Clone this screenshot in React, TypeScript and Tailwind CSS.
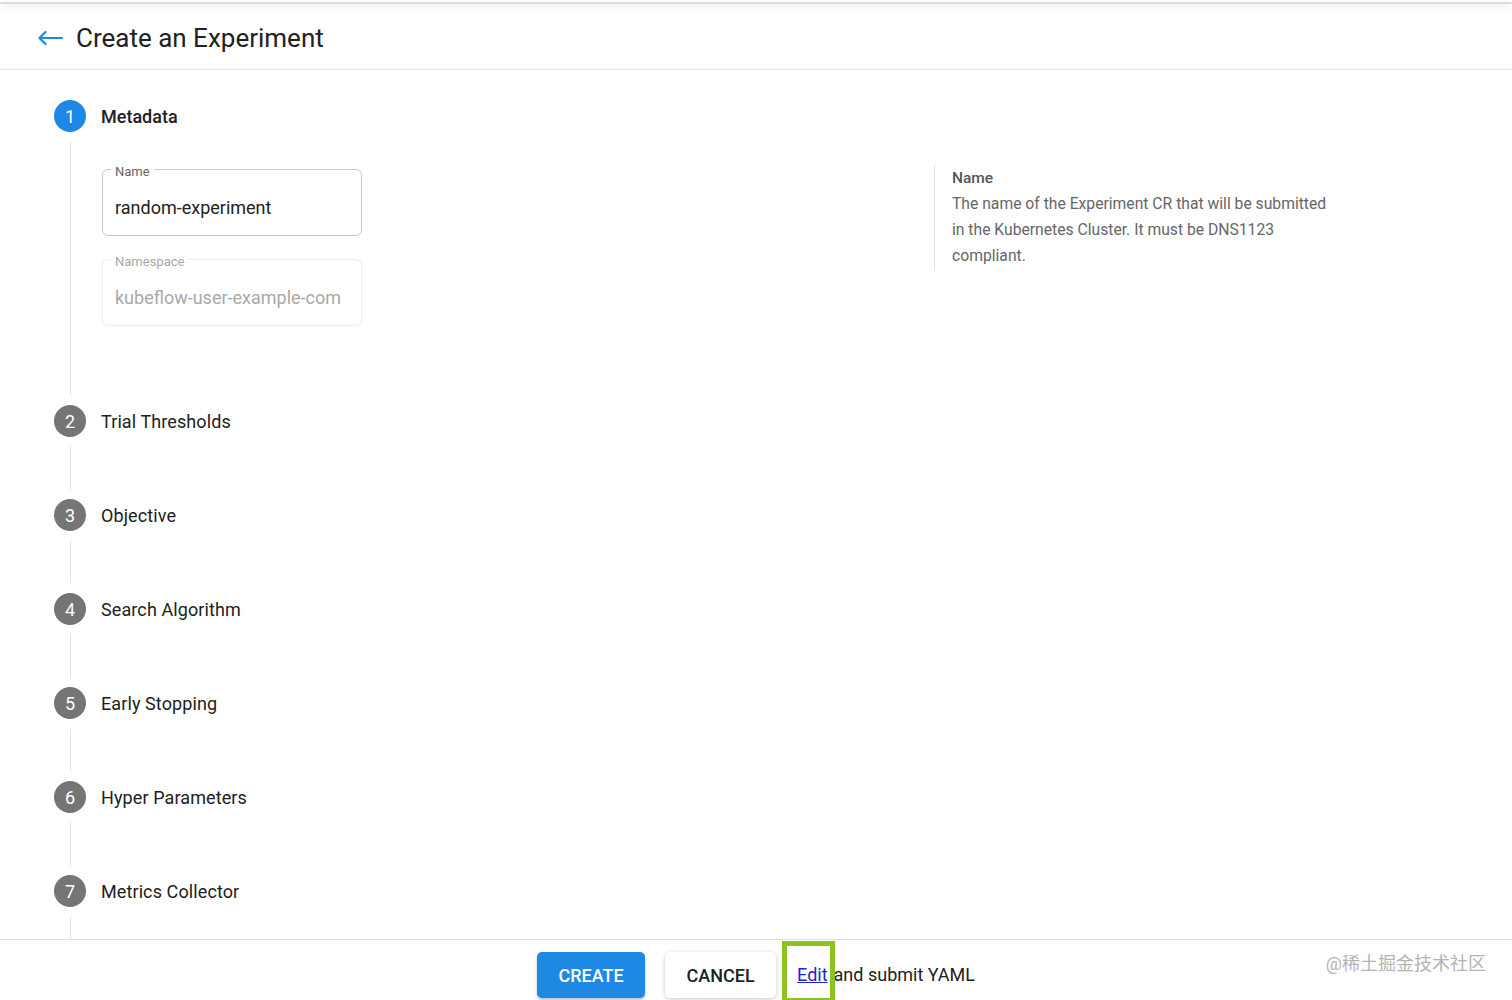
import React from 'react';

const steps = [
    'Trial Thresholds',
    'Objective',
    'Search Algorithm',
    'Early Stopping',
    'Hyper Parameters',
    'Metrics Collector',
];

function StepCircle({ n, active }: { n: number; active?: boolean }) {
    return (
        <div
            className={
                'w-8 h-8 rounded-full flex items-center justify-center text-white text-[18px] leading-none shrink-0 pt-[1px] ' +
                (active ? 'bg-[#1e88e5]' : 'bg-[#757575]')
            }
        >
            {n}
        </div>
    );
}

function Field({ label, value, disabled }: { label: string; value: string; disabled?: boolean }) {
    return (
        <div
            className={
                'relative w-[260px] h-[67px] rounded-[6px] border ' +
                (disabled ? 'border-[#ececec]' : 'border-[#c8c8c8]')
            }
        >
            <span
                className={
                    'absolute -top-[6px] left-[8px] px-[4px] bg-white text-[13px] leading-[16px] ' +
                    (disabled ? 'text-[#a8a8a8]' : 'text-[#666]')
                }
            >
                {label}
            </span>
            <div
                className={
                    'pt-[26px] px-[12px] text-[18px] leading-[24px] ' +
                    (disabled ? 'text-[#a8a8a8]' : 'text-[#212121]')
                }
            >
                {value}
            </div>
        </div>
    );
}

export default function App() {
    return (
        <div
            className="h-screen flex flex-col overflow-hidden bg-white text-[#212121]"
            style={{ fontFamily: 'Roboto, "Noto Sans CJK SC", sans-serif' }}
        >
            {/* top edge */}
            <div className="h-[2px] bg-white" />
            <div className="h-[2px] bg-[#dcdcdc] shadow-[0_2px_5px_rgba(0,0,0,0.12)] relative z-10" />

            {/* header */}
            <div className="h-[66px] shrink-0 flex items-center border-b border-[#e3e3e3] pl-[37px] pt-[2px]">
                <svg width="26" height="16" viewBox="0 0 26 16" fill="none">
                    <path d="M25 8H2.5M8.5 2L2.5 8l6 6" stroke="#1e88e5" strokeWidth="2.2" strokeLinecap="round" strokeLinejoin="round" />
                </svg>
                <h1 className="ml-[13px] text-[26px] leading-none text-[#212121]">Create an Experiment</h1>
            </div>

            {/* main */}
            <div className="relative flex-1 overflow-hidden">
                <div className="pl-[54px] pt-[30px] flex flex-col">
                    <div className="flex items-center h-8">
                        <StepCircle n={1} active />
                        <span className="ml-[15px] text-[18px] font-medium">Metadata</span>
                    </div>
                    <div className="ml-[16px] my-[10px] h-[253px] border-l border-[#e0e0e0] pl-[31px] pt-[27px] flex flex-col gap-[23px]">
                        <Field label="Name" value="random-experiment" />
                        <Field label="Namespace" value="kubeflow-user-example-com" disabled />
                    </div>

                    {steps.map((s, i) => (
                        <div key={s} className="flex flex-col">
                            <div className="flex items-center h-8">
                                <StepCircle n={i + 2} />
                                <span className="ml-[15px] text-[18px] tracking-[0.1px]">{s}</span>
                            </div>
                            <div className="ml-[16px] my-[10px] h-[42px] border-l border-[#e0e0e0]" />
                        </div>
                    ))}
                </div>

                {/* help panel */}
                <div className="absolute left-[934px] top-[95px] border-l border-[#e0e0e0] pl-[17px] w-[420px]">
                    <div className="text-[15.5px] leading-[26px] font-medium text-[#555]">Name</div>
                    <p className="text-[15.7px] leading-[26px] text-[#666] w-[380px]">
                        The name of the Experiment CR that will be submitted in the Kubernetes Cluster. It must be DNS1123 compliant.
                    </p>
                </div>
            </div>

            {/* footer */}
            <div className="relative h-[61px] shrink-0 border-t border-[#e0e0e0] pt-[12px] flex justify-center items-start">
                <button className="w-[108px] h-[46px] rounded-[5px] bg-[#1e88e5] text-white text-[18px] font-medium shadow-[0_2px_3px_rgba(0,0,0,0.25)]">
                    CREATE
                </button>
                <button className="ml-[20px] w-[111px] h-[46px] rounded-[5px] bg-white text-[#212121] text-[18px] font-medium shadow-[0_1px_4px_rgba(0,0,0,0.22)]">
                    CANCEL
                </button>
                <div className="ml-[21px] h-[44px] flex items-center text-[18px]">
                    <span className="relative">
                        <a className="text-[#2424d0] underline">Edit</a>
                        <span className="absolute left-[-15px] top-[-20px] w-[53px] h-[62px] border-[5px] border-[#8dc21f]" />
                    </span>
                    <span className="ml-[6px] text-[#212121]">and submit YAML</span>
                </div>
                <span className="absolute right-[26px] top-[10px] text-[18px] text-[#b3b3b3]">@稀土掘金技术社区</span>
            </div>
        </div>
    );
}
